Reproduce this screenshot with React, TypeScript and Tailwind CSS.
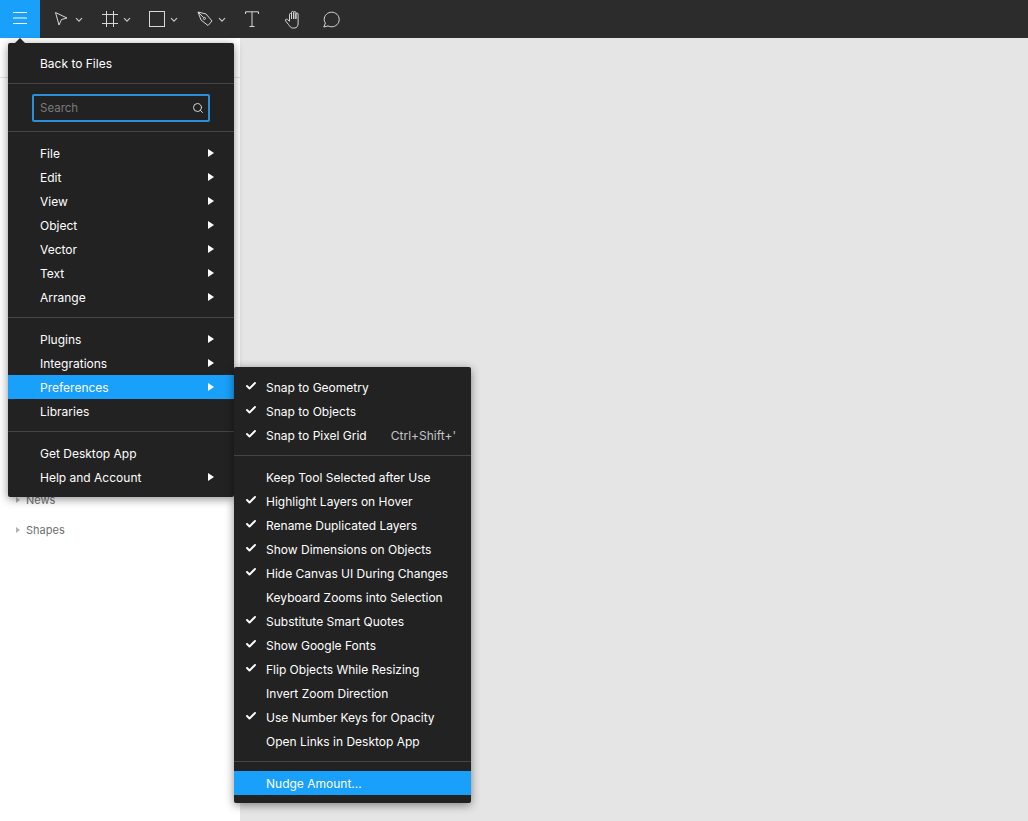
import { Check, Search } from "lucide-react";

type Entry = { label: string; arrow?: boolean; active?: boolean };

const mainGroups: Entry[][] = [
  [
    { label: "File", arrow: true },
    { label: "Edit", arrow: true },
    { label: "View", arrow: true },
    { label: "Object", arrow: true },
    { label: "Vector", arrow: true },
    { label: "Text", arrow: true },
    { label: "Arrange", arrow: true },
  ],
  [
    { label: "Plugins", arrow: true },
    { label: "Integrations", arrow: true },
    { label: "Preferences", arrow: true, active: true },
    { label: "Libraries" },
  ],
  [{ label: "Get Desktop App" }, { label: "Help and Account", arrow: true }],
];

const prefsTop = [
  { label: "Snap to Geometry", checked: true },
  { label: "Snap to Objects", checked: true },
  { label: "Snap to Pixel Grid", checked: true, shortcut: "Ctrl+Shift+'" },
];

const prefsMain = [
  { label: "Keep Tool Selected after Use", checked: false },
  { label: "Highlight Layers on Hover", checked: true },
  { label: "Rename Duplicated Layers", checked: true },
  { label: "Show Dimensions on Objects", checked: true },
  { label: "Hide Canvas UI During Changes", checked: true },
  { label: "Keyboard Zooms into Selection", checked: false },
  { label: "Substitute Smart Quotes", checked: true },
  { label: "Show Google Fonts", checked: true },
  { label: "Flip Objects While Resizing", checked: true },
  { label: "Invert Zoom Direction", checked: false },
  { label: "Use Number Keys for Opacity", checked: true },
  { label: "Open Links in Desktop App", checked: false },
];

function Caret() {
  return (
    <svg width="8" height="6" viewBox="0 0 8 6" fill="none" stroke="#c8c8c8" strokeWidth="1.2" className="ml-[5px] mt-[1px]">
      <path d="M1 1.2 L4 4.2 L7 1.2" />
    </svg>
  );
}

function Toolbar() {
  const stroke = { fill: "none", stroke: "#d8d8d8", strokeWidth: 1 };
  return (
    <div className="flex h-[38px] items-center bg-[#2c2c2c]">
      <div className="flex h-[38px] w-10 items-center justify-center bg-[#18a0fb]">
        <svg width="14" height="12" viewBox="0 0 14 12" {...stroke} stroke="#ffffff" className="-mt-[2px]">
          <path d="M0 0.5 H14 M0 6 H14 M0 11.5 H14" />
        </svg>
      </div>
      <div className="ml-[14px] flex w-[48px] items-center">
        <svg width="16" height="16" viewBox="0 0 16 16" {...stroke}>
          <path d="M1.5 1.5 L13 7 L7.5 8.5 L5 14 Z" />
        </svg>
        <Caret />
      </div>
      <div className="flex w-[47px] items-center">
        <svg width="16" height="16" viewBox="0 0 16 16" {...stroke}>
          <path d="M4.5 0 V16 M11.5 0 V16 M0 3.5 H16 M0 12.5 H16" />
        </svg>
        <Caret />
      </div>
      <div className="flex w-[48px] items-center">
        <svg width="16" height="16" viewBox="0 0 16 16" {...stroke}>
          <rect x="0.5" y="0.5" width="15" height="15" />
        </svg>
        <Caret />
      </div>
      <div className="flex w-[48px] items-center">
        <svg width="16" height="16" viewBox="0 0 16 16" {...stroke}>
          <path d="M1 1 L9 3 L15 10 L11 14.5 L4 9 Z M1 1 L6.5 6.5" />
          <circle cx="7.4" cy="7.4" r="1.1" />
        </svg>
        <Caret />
      </div>
      <div className="flex w-[38px] items-center">
        <svg width="14" height="16" viewBox="0 0 14 16" {...stroke}>
          <path d="M0.5 3 V0.8 H13.5 V3 M7 0.8 V15.5 M4.5 15.5 H9.5" />
        </svg>
      </div>
      <div className="flex w-[40px] items-center">
        <svg width="18" height="19" viewBox="0 0 18 19" {...stroke}>
          <path d="M4 14.5 L1 10.8 C0.3 9.6 1.8 8.6 3 9.6 L5 11.2 V4.5 C5 3.1 7 3.1 7 4.5 V9 V2.5 C7 1 9.2 1 9.2 2.5 V9 V2.6 C9.2 1.2 11.4 1.2 11.4 2.6 V9 V4 C11.4 2.7 13.6 2.7 13.6 4 V13 C13.6 16.2 12.4 18 10 18 H8 C6.2 18 5.2 16.2 4 14.5 Z" transform="translate(1.5 0)" />
        </svg>
      </div>
      <svg width="17" height="17" viewBox="0 0 17 17" {...stroke}>
        <path d="M0.8 16 L2.4 12 C1.6 11 1.2 9.8 1.2 8.5 C1.2 4.4 4.5 1.2 8.7 1.2 C12.8 1.2 16.2 4.4 16.2 8.5 C16.2 12.6 12.8 15.8 8.7 15.8 C7.4 15.8 6.2 15.5 5 14.9 Z" />
      </svg>
    </div>
  );
}

function SidePanel() {
  return (
    <div className="flex w-[240px] flex-col bg-white">
      <div className="h-10 border-b border-[#e5e5e5]" />
      <div className="flex flex-col gap-[14px] pl-4 pt-[414px] text-[11px] leading-4 text-[#6f6f6f]">
        {["News", "Shapes"].map((label) => (
          <div key={label} className="flex items-center gap-[6px]">
            <span className="h-0 w-0 border-y-[3px] border-l-[4px] border-y-transparent border-l-[#b3b3b3]" />
            {label}
          </div>
        ))}
      </div>
    </div>
  );
}

function Divider({ className }: { className: string }) {
  return <div className={`h-px bg-[#454545] ${className}`} />;
}

function MainMenu() {
  return (
    <div className="absolute left-2 top-[43px] z-10 w-[226px] rounded-[2px] bg-[#222222] pt-2 shadow-[0_2px_10px_rgba(0,0,0,0.45)]">
      <span className="absolute -top-[5px] left-[7px] h-0 w-0 border-x-[5px] border-b-[5px] border-x-transparent border-b-[#222222]" />
      <div className="flex h-6 items-center pl-8 pt-[2px] text-white">Back to Files</div>
      <Divider className="mt-2" />
      <div className="mx-6 mt-[10px] flex h-[28px] items-center justify-between rounded-[2px] border-2 border-[#2a8fd8] pl-[6px] pr-[4px]">
        <span className="pt-[2px] text-[11.5px] text-[#7a7a7a]">Search</span>
        <Search size={12} color="#e8e8e8" strokeWidth={1.8} />
      </div>
      <Divider className="mt-[9px]" />
      {mainGroups.map((group, i) => (
        <div key={i}>
          {i > 0 && <Divider className="mt-2" />}
          <div className="pt-[9px]">
            {group.map((item) => (
              <div
                key={item.label}
                className={`flex h-6 items-center justify-between pl-8 pr-5 text-white ${item.active ? "bg-[#18a0fb]" : ""}`}
              >
                <span className="pt-[2px]">{item.label}</span>
                {item.arrow && (
                  <span className="h-0 w-0 border-y-[4px] border-l-[6px] border-y-transparent border-l-white" />
                )}
              </div>
            ))}
          </div>
        </div>
      ))}
      <div className="h-2" />
    </div>
  );
}

function PrefRow({ label, checked, shortcut }: { label: string; checked: boolean; shortcut?: string }) {
  return (
    <div className="flex h-6 items-center text-white">
      <div className="flex w-8 justify-end pr-[9px]">
        {checked && <Check size={12} strokeWidth={3.8} color="#ffffff" className="-mt-[2px]" />}
      </div>
      <span className="pt-[2px]">{label}</span>
      {shortcut && <span className="ml-auto pr-[15px] pt-[2px] text-[#c4c4c4]">{shortcut}</span>}
    </div>
  );
}

function PrefsMenu() {
  return (
    <div className="absolute left-[234px] top-[367px] z-20 w-[237px] rounded-[2px] bg-[#222222] pt-2 shadow-[0_2px_10px_rgba(0,0,0,0.45)]">
      {prefsTop.map((row) => (
        <PrefRow key={row.label} {...row} />
      ))}
      <Divider className="mt-2" />
      <div className="pt-[9px]">
        {prefsMain.map((row) => (
          <PrefRow key={row.label} {...row} />
        ))}
      </div>
      <Divider className="mt-2" />
      <div className="mt-[9px] flex h-6 items-center bg-[#18a0fb] pl-8 pt-[2px] text-white">Nudge Amount…</div>
      <div className="h-2" />
    </div>
  );
}

export default function App() {
  return (
    <div className="relative flex h-[821px] w-[1028px] flex-col overflow-hidden bg-[#e5e5e5] font-['Inter',sans-serif] text-[12px]">
      <Toolbar />
      <div className="flex flex-1">
        <SidePanel />
        <div className="flex-1" />
      </div>
      <MainMenu />
      <PrefsMenu />
    </div>
  );
}
